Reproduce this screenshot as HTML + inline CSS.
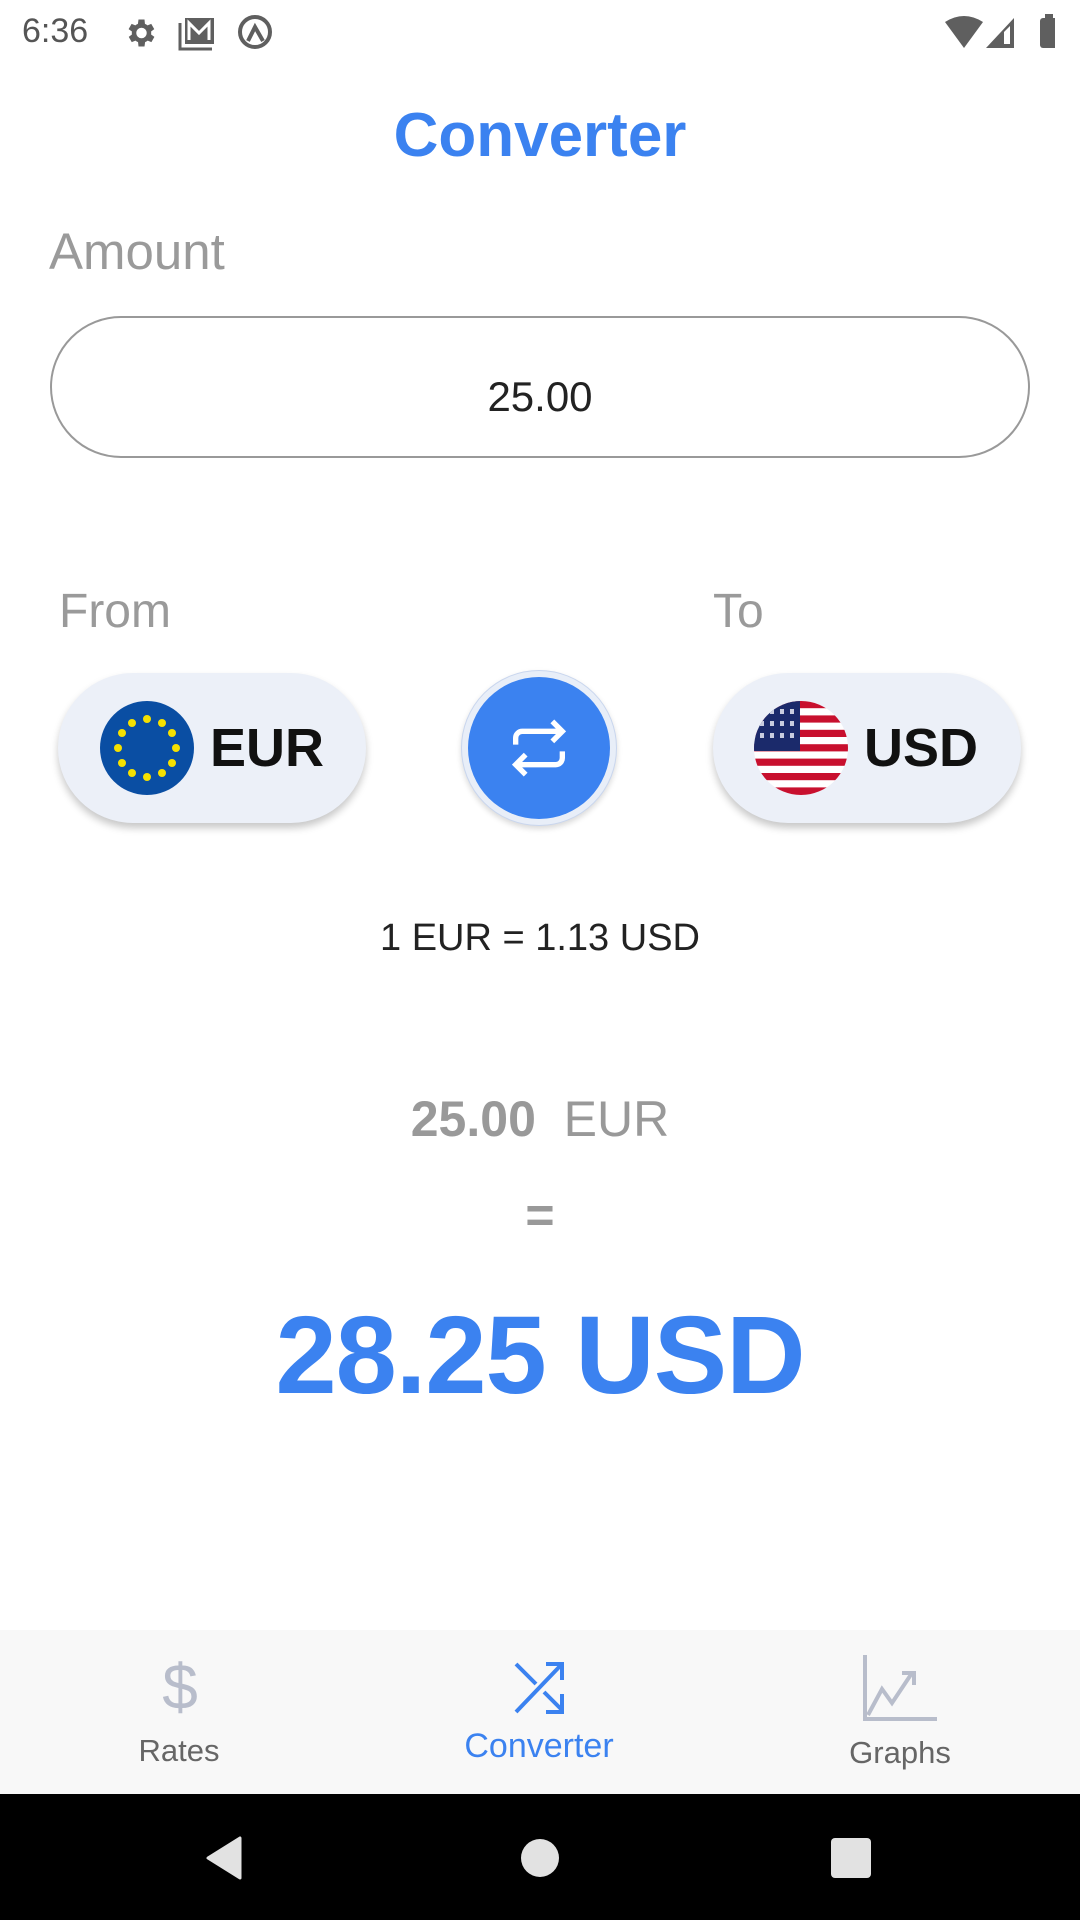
<!DOCTYPE html>
<html><head><meta charset="utf-8"><style>
*{margin:0;padding:0;box-sizing:border-box}
body{width:1080px;height:1920px;background:#fff;font-family:"Liberation Sans",sans-serif;position:relative;overflow:hidden}
.a{position:absolute}
.c{position:absolute;left:0;width:1080px;text-align:center}
.pill{position:absolute;top:673px;height:150px;width:308px;border-radius:75px;background:#ecf0f8;box-shadow:0 5px 8px rgba(0,0,0,0.22)}
.code{position:absolute;left:150px;top:0;line-height:150px;font-size:54px;font-weight:bold;color:#111}
.lbl{position:absolute;font-size:31px;color:#666;text-align:center;width:300px}
</style></head><body>
<!-- status bar -->
<div class="a" style="left:22px;top:12px;font-size:34px;color:#555">6:36</div>
<svg class="a" style="left:122px;top:15px" width="36" height="36" viewBox="0 0 24 24"><path fill="#5f5f5f" d="M19.4 13a7.5 7.5 0 000-2l2.1-1.6-2-3.5-2.5 1a7 7 0 00-1.7-1L15 3h-4l-.4 2.9a7 7 0 00-1.7 1l-2.5-1-2 3.5L6.6 11a7.5 7.5 0 000 2l-2.1 1.6 2 3.5 2.5-1a7 7 0 001.7 1L11 21h4l.4-2.9a7 7 0 001.7-1l2.5 1 2-3.5zM13 15.5a3.5 3.5 0 110-7 3.5 3.5 0 010 7z"/></svg>
<svg class="a" style="left:177px;top:15px" width="40" height="36" viewBox="0 0 40 36"><path fill="none" stroke="#5f5f5f" stroke-width="3" d="M3 8v26h32"/><rect x="8" y="3" width="29" height="26" fill="#5f5f5f"/><path d="M12 25V8l10 10 10-10v17" fill="none" stroke="#fff" stroke-width="3"/></svg>
<svg class="a" style="left:236px;top:13px" width="38" height="38" viewBox="0 0 38 38"><circle cx="19" cy="19" r="15" fill="none" stroke="#5f5f5f" stroke-width="4"/><path d="M12 28L19 14l8 14" fill="none" stroke="#5f5f5f" stroke-width="4"/></svg>
<svg class="a" style="left:945px;top:14px" width="110" height="36" viewBox="0 0 110 36"><path d="M0 8Q19-4 38 8L19 34z" fill="#5f5f5f"/><path d="M41 34L69 4v30z" fill="#5f5f5f"/><path d="M59 30V18l6-6v18z" fill="#fff"/><rect x="95" y="4" width="18" height="30" rx="3" fill="#5f5f5f"/><rect x="100" y="0" width="8" height="6" fill="#5f5f5f"/></svg>

<div class="c" style="top:100px;font-size:62px;font-weight:bold;color:#3b82f0">Converter</div>
<div class="a" style="left:49px;top:222px;font-size:51px;color:#9a9a9a">Amount</div>
<div class="a" style="left:50px;top:316px;width:980px;height:142px;border:2px solid #999;border-radius:71px;text-align:center;line-height:138px;font-size:42px;color:#222;padding-top:20px;line-height:118px">25.00</div>

<div class="a" style="left:59px;top:584px;font-size:48px;color:#9a9a9a">From</div>
<div class="a" style="left:713px;top:584px;font-size:48px;color:#9a9a9a">To</div>

<div class="pill" style="left:58px">
<svg class="a" style="left:42px;top:28px" width="94" height="94" viewBox="0 0 94 94"><circle cx="47" cy="47" r="47" fill="#0a4ea3"/>
<g fill="#f5e000"><circle cx="47" cy="18" r="4"/><circle cx="47" cy="76" r="4"/><circle cx="18" cy="47" r="4"/><circle cx="76" cy="47" r="4"/><circle cx="32" cy="22" r="4"/><circle cx="62" cy="22" r="4"/><circle cx="32" cy="72" r="4"/><circle cx="62" cy="72" r="4"/><circle cx="22" cy="32" r="4"/><circle cx="72" cy="32" r="4"/><circle cx="22" cy="62" r="4"/><circle cx="72" cy="62" r="4"/></g></svg>
<div class="code" style="left:152px">EUR</div></div>

<div class="a" style="left:461px;top:670px;width:156px;height:156px;border-radius:50%;background:#e8eef8;border:1px solid #c9d6ee;box-shadow:0 3px 6px rgba(0,0,0,0.15)"></div>
<div class="a" style="left:468px;top:677px;width:142px;height:142px;border-radius:50%;background:#3b82f0"></div>
<svg class="a" style="left:499px;top:708px" width="80" height="80" viewBox="0 0 24 24"><path fill="none" stroke="#fff" stroke-width="1.6" d="M5 11V9a2 2 0 012-2h12M16 4l3 3-3 3M19 13v2a2 2 0 01-2 2H5M8 20l-3-3 3-3"/></svg>

<div class="pill" style="left:713px">
<svg class="a" style="left:41px;top:28px" width="94" height="94" viewBox="0 0 94 94"><defs><clipPath id="cp"><circle cx="47" cy="47" r="47"/></clipPath></defs>
<g clip-path="url(#cp)"><rect width="94" height="94" fill="#fff"/>
<g fill="#c8102e"><rect y="0" width="94" height="7.2"/><rect y="14.4" width="94" height="7.2"/><rect y="28.8" width="94" height="7.2"/><rect y="43.2" width="94" height="7.2"/><rect y="57.6" width="94" height="7.2"/><rect y="72" width="94" height="7.2"/><rect y="86.4" width="94" height="7.6"/></g>
<rect width="46" height="50" fill="#1b2a6b"/>
<g fill="#c9cde0"><rect x="6" y="8" width="4" height="5"/><rect x="16" y="8" width="4" height="5"/><rect x="26" y="8" width="4" height="5"/><rect x="36" y="8" width="4" height="5"/><rect x="6" y="20" width="4" height="5"/><rect x="16" y="20" width="4" height="5"/><rect x="26" y="20" width="4" height="5"/><rect x="36" y="20" width="4" height="5"/><rect x="6" y="32" width="4" height="5"/><rect x="16" y="32" width="4" height="5"/><rect x="26" y="32" width="4" height="5"/><rect x="36" y="32" width="4" height="5"/></g></g></svg>
<div class="code" style="left:151px">USD</div></div>

<div class="c" style="top:917px;font-size:38px;color:#222">1 EUR = 1.13 USD</div>
<div class="c" style="top:1090px;font-size:50px;color:#999"><b>25.00</b>&nbsp; EUR</div>
<div class="c" style="top:1186px;font-size:50px;color:#999;font-weight:bold">=</div>
<div class="c" style="top:1292px;font-size:110px;font-weight:bold;color:#3b82f0;letter-spacing:-1px">28.25 USD</div>

<!-- bottom nav -->
<div class="a" style="left:0;top:1630px;width:1080px;height:164px;background:#f8f8f8"></div>
<div class="a" style="left:160px;top:1655px;width:40px;height:64px;font-size:64px;line-height:64px;color:#b8bdcb;text-align:center">$</div>
<svg class="a" style="left:514px;top:1660px" width="52" height="56" viewBox="0 0 52 56"><path fill="none" stroke="#3b82f0" stroke-width="4" d="M2 52L48 4M32 4h16v16M2 4l20 20M30 32l18 18M48 34v18H32"/></svg>
<svg class="a" style="left:862px;top:1655px" width="76" height="66" viewBox="0 0 76 66"><path fill="none" stroke="#b8bdcb" stroke-width="4" d="M3 0v64h72M6 60l14-26 10 14 20-30M40 18h12v12"/></svg>
<div class="lbl" style="left:29px;top:1733px">Rates</div>
<div class="lbl" style="left:389px;top:1727px;color:#3b82f0;font-size:34px">Converter</div>
<div class="lbl" style="left:750px;top:1735px">Graphs</div>

<div class="a" style="left:0;top:1794px;width:1080px;height:126px;background:#000"></div>
<svg class="a" style="left:204px;top:1836px" width="40" height="44" viewBox="0 0 40 44"><path d="M36 2v40L4 22z" fill="#e2e2e2" stroke="#e2e2e2" stroke-width="3" stroke-linejoin="round"/></svg>
<div class="a" style="left:521px;top:1839px;width:38px;height:38px;border-radius:50%;background:#e2e2e2"></div>
<div class="a" style="left:831px;top:1838px;width:40px;height:40px;border-radius:4px;background:#e2e2e2"></div>
</body></html>
